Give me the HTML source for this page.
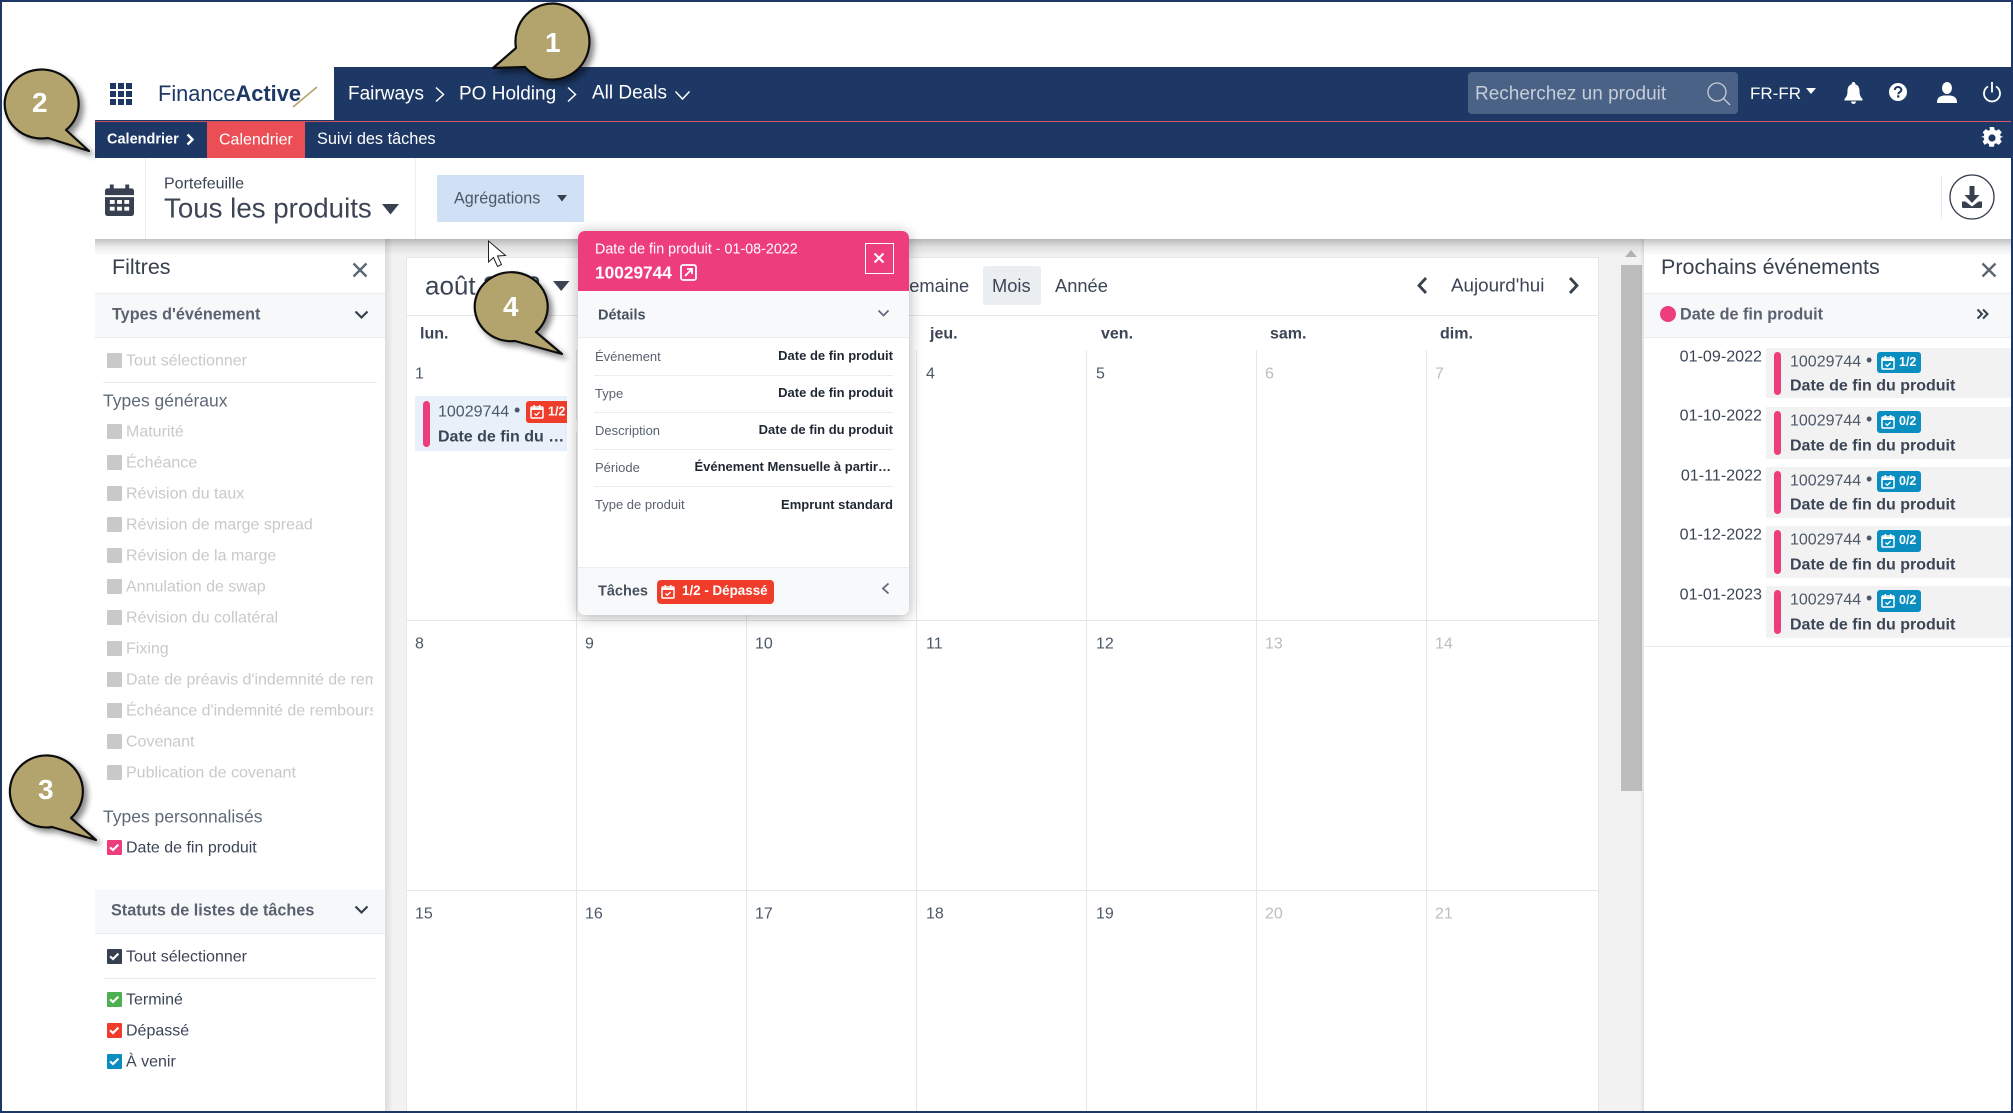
<!DOCTYPE html>
<html lang="fr"><head><meta charset="utf-8"><title>Calendrier</title>
<style>
html,body{margin:0;padding:0;width:2013px;height:1113px;overflow:hidden;background:#fff}
body{font-family:"Liberation Sans",sans-serif;color:#36404f;position:relative}
.a{position:absolute}
.t{position:absolute;white-space:nowrap;transform:translateY(calc(-50% + 1px));line-height:1.2}
.nav{color:#fff;font-size:19px}
.b{font-weight:700}
.cb{position:absolute;left:107px;width:14.5px;height:14.5px;background:#c9c9c9;border-radius:1px}
.cb svg{position:absolute;left:0;top:0;width:14.5px;height:14.5px}
.dis{left:126px;font-size:16px;color:#c9c9c9}
.on{left:126px;font-size:16px;color:#3b4556}
.day{font-size:16px;color:#4c5868}
.we{color:#bdbdbd}
.wd{font-size:16px;font-weight:700;color:#3b4556}
.vl{position:absolute;width:1px;top:350px;height:763px;background:#e6e6e6}
.hl{position:absolute;left:406px;width:1192px;height:1px;background:#e6e6e6}
.pl{left:595px;font-size:13px;color:#59626f}
.pr{right:1120px;font-size:13px;font-weight:700;color:#1f2733}
.ps{position:absolute;left:594px;width:299px;height:1px;background:#e9edf1}
.row{position:absolute;left:1766px;width:245px;background:#f2f2f2}
.bar{position:absolute;left:8px;width:7px;background:#ee3d7d;border-radius:3.5px}
.dt{right:251px;font-size:16.1px;color:#3b4556}
.id{left:1790px;font-size:16px;color:#4c5868}
.dot{left:1866px;font-size:18px;color:#4c5868}
.nm{left:1790px;font-size:16px;font-weight:700;color:#3b4556}
.bd{position:absolute;left:1877px;width:44px;height:21px;background:#0a8dbf;border-radius:3px;color:#fff;font-weight:700;font-size:12.5px}
.bd svg{position:absolute;left:4px;top:3px;width:14px;height:15px}
.bd span{position:absolute;left:22px;top:3px;line-height:15px}
</style></head>
<body>
<svg width="0" height="0" style="position:absolute">
<symbol id="ck" viewBox="0 0 15 15"><path d="M3.2 7.6 6.2 10.4 11.8 4.8" fill="none" stroke="#fff" stroke-width="2.2"/></symbol>
<symbol id="cal" viewBox="0 0 14 15"><path d="M2 3h10a1 1 0 0 1 1 1v9a1 1 0 0 1-1 1H2a1 1 0 0 1-1-1V4a1 1 0 0 1 1-1Z" fill="none" stroke="#fff" stroke-width="1.5"/><path d="M1 4h12v2H1zM3.5 1h1.6v3H3.500zM8.900 1h1.600v3H8.900z" fill="#fff"/><path d="M4.500 9.500 6.300 11.200 9.600 8" fill="none" stroke="#fff" stroke-width="1.400"/></symbol>
</svg>

<!-- top nav -->
<div class="a" style="left:334px;top:67px;width:1679px;height:54px;background:#1d3864"></div>
<div class="a" style="left:95px;top:120px;width:1918px;height:2px;background:#1d3864"></div>
<div class="a" style="left:334px;top:121px;width:1679px;height:1px;background:#d9596a"></div>
<div class="a" style="left:95px;top:122px;width:1918px;height:36px;background:#1d3864"></div>
<div class="a" style="left:95px;top:121px;width:239px;height:1px;background:#c9505f"></div>

<svg class="a" style="left:110px;top:83px" width="22" height="22" viewBox="0 0 22 22" fill="#1d3864"><path d="M0 0h6v6H0zM8 0h6v6H8zM16 0h6v6h-6zM0 8h6v6H0zM8 8h6v6H8zM16 8h6v6h-6zM0 16h6v6H0zM8 16h6v6H8zM16 16h6v6h-6z"/></svg>
<div class="t" style="left:158px;top:93px;font-size:21.8px;color:#1d3864">Finance<span class="b">Active</span></div>
<svg class="a" style="left:292px;top:86px" width="26" height="22"><path d="M1 21 25 1" stroke="#b3a36d" stroke-width="1.600"/></svg>

<div class="t nav" style="left:348px;top:94px">Fairways</div>
<svg class="a" style="left:434px;top:86px" width="12" height="17"><path d="M2 1.500 9.500 8.500 2 15.500" fill="none" stroke="#fff" stroke-width="1.500"/></svg>
<div class="t nav" style="left:459px;top:94px">PO Holding</div>
<svg class="a" style="left:566px;top:86px" width="12" height="17"><path d="M2 1.500 9.500 8.500 2 15.500" fill="none" stroke="#fff" stroke-width="1.500"/></svg>
<div class="t nav" style="left:592px;top:93px">All Deals</div>
<svg class="a" style="left:674px;top:90px" width="17" height="11"><path d="M1.500 1.500 8.500 9 15.500 1.500" fill="none" stroke="#fff" stroke-width="1.500"/></svg>

<div class="a" style="left:1468px;top:72px;width:270px;height:42px;background:#4a6285;border-radius:4px"></div>
<div class="t" style="left:1475px;top:94px;font-size:19px;color:#c6cdd8">Recherchez un produit</div>
<svg class="a" style="left:1706px;top:81px" width="26" height="25" fill="none" stroke="#c6cdd8" stroke-width="1.300"><circle cx="11" cy="11" r="9"/><path d="M17.500 17.500 24 24"/></svg>
<div class="t" style="left:1750px;top:93px;font-size:17px;color:#fff">FR-FR</div>
<svg class="a" style="left:1806px;top:88px" width="11" height="7"><path d="M0 0h10L5 6Z" fill="#fff"/></svg>
<svg class="a" style="left:1844px;top:82px" width="19" height="22" viewBox="0 0 19 22" fill="#fff"><path d="M9.500 0a1.700 1.700 0 0 1 1.700 2.300C14 3 15.500 5.500 15.500 9c0 4.500 1.300 6 3 8v1.500H.5V17c1.700-2 3-3.500 3-8 0-3.500 1.500-6 4.300-6.700A1.700 1.700 0 0 1 9.500 0ZM7 19.500h5a2.500 2.500 0 0 1-5 0Z"/></svg>
<svg class="a" style="left:1889px;top:83px" width="18" height="18" viewBox="0 0 18 18"><circle cx="9" cy="9" r="9" fill="#fff"/><path d="M5.800 7C5.800 5.200 7.200 4 9 4s3.300 1.100 3.300 2.900c0 2.300-3 2.200-3 4.300" fill="none" stroke="#1d3864" stroke-width="2"/><rect x="8.100" y="12.300" width="2.300" height="2.300" fill="#1d3864"/></svg>
<svg class="a" style="left:1937px;top:82px" width="20" height="21" viewBox="0 0 20 21" fill="#fff"><ellipse cx="10" cy="6" rx="5" ry="6"/><path d="M0 21c0-4 1-6.500 6.500-7.500h7C19 14.500 20 17 20 21Z"/></svg>
<svg class="a" style="left:1983px;top:82px" width="18" height="21" viewBox="0 0 18 21" fill="none" stroke="#fff" stroke-width="1.800"><path d="M9 0v10.500"/><path d="M5 4.500a8 8 0 1 0 8 0"/></svg>
<svg class="a" style="left:1981px;top:127px" width="22" height="22" viewBox="0 0 22 22"><path fill="#fff" d="M8.500 0h5l.7 3.200 1.800.8 2.800-1.700 3.200 3.500-1.800 2.700.7 1.700L24 11l-3 .8-.7 1.800 1.800 2.700-3.500 3.500-2.700-1.700-1.900.7-.7 3.200h-5l-.7-3.200-1.800-.7-2.800 1.700L.9 16.300l1.800-2.700-.7-1.800L-1 11l3-.8.700-1.700L.9 5.800l3.400-3.500 2.800 1.700 1.800-.8Z" transform="scale(.9) translate(1 0)"/><circle cx="11" cy="11" r="3.600" fill="#1d3864"/></svg>

<!-- sub nav -->
<div class="t b" style="left:107px;top:139px;font-size:14.5px;color:#fff">Calendrier</div>
<svg class="a" style="left:186px;top:133px" width="9" height="13"><path d="M1.500 1.500 6.500 6.500 1.500 11.500" fill="none" stroke="#fff" stroke-width="2.400"/></svg>
<div class="a" style="left:207px;top:122px;width:98px;height:36px;background:#eb4f55"></div>
<div class="t" style="left:219px;top:139px;font-size:16px;color:#fff">Calendrier</div>
<div class="t" style="left:317px;top:139px;font-size:16.3px;color:#fff">Suivi des tâches</div>

<!-- main bg -->
<div class="a" style="left:385px;top:239px;width:1628px;height:874px;background:#f2f2f2"></div>
<!-- calendar card -->
<div class="a" style="left:406px;top:257px;width:1191px;height:856px;background:#fff;border:1px solid #e6e6e6;border-bottom:0"></div>
<div class="hl" style="top:315px"></div>
<div class="vl" style="left:576px"></div><div class="vl" style="left:746px"></div><div class="vl" style="left:916px"></div><div class="vl" style="left:1086px"></div><div class="vl" style="left:1256px"></div><div class="vl" style="left:1426px"></div>
<div class="hl" style="top:620px"></div><div class="hl" style="top:890px"></div>

<div class="t" style="left:425px;top:285px;font-size:26px;color:#3b4556">août 2022</div>
<svg class="a" style="left:553px;top:281px" width="17" height="11"><path d="M0 0h16.500L8.200 10Z" fill="#3b4556"/></svg>
<div class="t" style="left:897px;top:285px;font-size:18.3px;color:#3b4556">Semaine</div>
<div class="a" style="left:983px;top:266px;width:58px;height:39px;background:#ebeef1;border-radius:3px"></div>
<div class="t" style="left:992px;top:285px;font-size:18.3px;color:#3b4556">Mois</div>
<div class="t" style="left:1055px;top:285px;font-size:18.3px;color:#3b4556">Année</div>
<svg class="a" style="left:1416px;top:276px" width="12" height="19"><path d="M10 2 3 9.500 10 17" fill="none" stroke="#36404f" stroke-width="2.800"/></svg>
<div class="t" style="left:1451px;top:285px;font-size:18.8px;color:#3b4556">Aujourd'hui</div>
<svg class="a" style="left:1568px;top:276px" width="12" height="19"><path d="M2 2 9 9.500 2 17" fill="none" stroke="#36404f" stroke-width="2.800"/></svg>

<div class="t wd" style="left:420px;top:333px">lun.</div>
<div class="t wd" style="left:930px;top:333px">jeu.</div>
<div class="t wd" style="left:1101px;top:333px">ven.</div>
<div class="t wd" style="left:1270px;top:333px">sam.</div>
<div class="t wd" style="left:1440px;top:333px">dim.</div>

<div class="t day" style="left:415px;top:373px">1</div><div class="t day" style="left:926px;top:373px">4</div><div class="t day" style="left:1096px;top:373px">5</div><div class="t day we" style="left:1265px;top:373px">6</div><div class="t day we" style="left:1435px;top:373px">7</div>
<div class="t day" style="left:415px;top:643px">8</div><div class="t day" style="left:585px;top:643px">9</div><div class="t day" style="left:755px;top:643px">10</div><div class="t day" style="left:926px;top:643px">11</div><div class="t day" style="left:1096px;top:643px">12</div><div class="t day we" style="left:1265px;top:643px">13</div><div class="t day we" style="left:1435px;top:643px">14</div>
<div class="t day" style="left:415px;top:913px">15</div><div class="t day" style="left:585px;top:913px">16</div><div class="t day" style="left:755px;top:913px">17</div><div class="t day" style="left:926px;top:913px">18</div><div class="t day" style="left:1096px;top:913px">19</div><div class="t day we" style="left:1265px;top:913px">20</div><div class="t day we" style="left:1435px;top:913px">21</div>

<!-- event pill -->
<div class="a" style="left:415px;top:396px;width:152px;height:55px;background:#e8f0fa"></div>
<div class="a" style="left:423px;top:401px;width:7px;height:46px;background:#ee3d7d;border-radius:3.500px"></div>
<div class="t" style="left:438px;top:411px;font-size:16px;color:#4c5868">10029744</div>
<div class="t" style="left:514px;top:410px;font-size:18px;color:#4c5868">•</div>
<div class="a" style="left:526px;top:401px;width:41px;height:22px;background:#f03d2b;border-radius:3px 0 0 3px"></div>
<svg class="a" style="left:530px;top:404px" width="14" height="15"><use href="#cal"/></svg>
<div class="t b" style="left:548px;top:411px;font-size:12.5px;color:#fff">1/2</div>
<div class="t b" style="left:438px;top:436px;font-size:16px;color:#3b4556">Date de fin du …</div>

<!-- scrollbar -->
<div class="a" style="left:1621px;top:265px;width:21px;height:526px;background:#bdbdbd"></div>
<svg class="a" style="left:1625px;top:250px" width="12" height="8"><path d="M6 0 12 7H0Z" fill="#b5b5b5"/></svg>

<!-- left panel -->
<div class="a" style="left:95px;top:239px;width:290px;height:874px;background:#fff"></div>
<div class="a" style="left:385px;top:239px;width:8px;height:874px;background:linear-gradient(90deg,rgba(0,0,0,.09),rgba(0,0,0,0))"></div>

<div class="t" style="left:112px;top:267px;font-size:21.5px;color:#36404f">Filtres</div>
<svg class="a" style="left:352px;top:262px" width="16" height="16"><path d="M1.500 1.500 14.500 14.500M14.500 1.500 1.500 14.500" stroke="#5b6572" stroke-width="2.300"/></svg>
<div class="a" style="left:95px;top:293px;width:290px;height:45px;background:#f6f8fa;border-top:1px solid #eceff2;border-bottom:1px solid #e8ebef;box-sizing:border-box"></div>
<div class="t b" style="left:112px;top:314px;font-size:16.2px;color:#5a6270">Types d'événement</div>
<svg class="a" style="left:354px;top:310px" width="15" height="10"><path d="M1.500 1.500 7.500 7.500 13.500 1.500" fill="none" stroke="#36404f" stroke-width="2.200"/></svg>

<div class="cb" style="top:353px"></div><div class="t dis" style="top:360px">Tout sélectionner</div>
<div class="a" style="left:103px;top:382px;width:274px;height:1px;background:#e9ebee"></div>
<div class="t" style="left:103px;top:400px;font-size:17.5px;color:#5f6a78">Types généraux</div>
<div class="cb" style="top:424px"></div><div class="t dis" style="top:431px">Maturité</div>
<div class="cb" style="top:455px"></div><div class="t dis" style="top:462px">Échéance</div>
<div class="cb" style="top:486px"></div><div class="t dis" style="top:493px">Révision du taux</div>
<div class="cb" style="top:517px"></div><div class="t dis" style="top:524px">Révision de marge spread</div>
<div class="cb" style="top:548px"></div><div class="t dis" style="top:555px">Révision de la marge</div>
<div class="cb" style="top:579px"></div><div class="t dis" style="top:586px">Annulation de swap</div>
<div class="cb" style="top:610px"></div><div class="t dis" style="top:617px">Révision du collatéral</div>
<div class="cb" style="top:641px"></div><div class="t dis" style="top:648px">Fixing</div>
<div class="cb" style="top:672px"></div><div class="t dis" style="top:679px;width:247px;overflow:hidden">Date de préavis d'indemnité de remboursement</div>
<div class="cb" style="top:703px"></div><div class="t dis" style="top:710px;width:247px;overflow:hidden">Échéance d'indemnité de remboursement</div>
<div class="cb" style="top:734px"></div><div class="t dis" style="top:741px">Covenant</div>
<div class="cb" style="top:765px"></div><div class="t dis" style="top:772px">Publication de covenant</div>
<div class="t" style="left:103px;top:816px;font-size:17.5px;color:#5f6a78">Types personnalisés</div>
<div class="cb" style="top:840px;background:#ee3d7d"><svg><use href="#ck"/></svg></div><div class="t on" style="top:846.5px">Date de fin produit</div>
<div class="a" style="left:95px;top:890px;width:290px;height:44px;background:#f6f8fa;border-bottom:1px solid #e8ebef;box-sizing:border-box"></div>
<div class="t b" style="left:111px;top:910px;font-size:16.2px;color:#5a6270">Statuts de listes de tâches</div>
<svg class="a" style="left:354px;top:905px" width="15" height="10"><path d="M1.500 1.500 7.500 7.500 13.500 1.500" fill="none" stroke="#36404f" stroke-width="2.200"/></svg>
<div class="cb" style="top:949px;background:#36404f"><svg><use href="#ck"/></svg></div><div class="t on" style="top:956px">Tout sélectionner</div>
<div class="a" style="left:103px;top:978px;width:274px;height:1px;background:#e9ebee"></div>
<div class="cb" style="top:992px;background:#4caf50"><svg><use href="#ck"/></svg></div><div class="t on" style="top:999px">Terminé</div>
<div class="cb" style="top:1023px;background:#f03d2b"><svg><use href="#ck"/></svg></div><div class="t on" style="top:1030px">Dépassé</div>
<div class="cb" style="top:1054px;background:#0a8dbf"><svg><use href="#ck"/></svg></div><div class="t on" style="top:1061px">À venir</div>

<!-- right panel -->
<div class="a" style="left:1644px;top:239px;width:369px;height:874px;background:#fff"></div>
<div class="a" style="left:1640px;top:239px;width:4px;height:874px;background:linear-gradient(270deg,rgba(0,0,0,.08),rgba(0,0,0,0))"></div>
<div class="t" style="left:1661px;top:267px;font-size:21.5px;color:#36404f">Prochains événements</div>
<svg class="a" style="left:1981px;top:262px" width="16" height="16"><path d="M1.500 1.500 14.500 14.500M14.500 1.500 1.500 14.500" stroke="#5b6572" stroke-width="2.300"/></svg>
<div class="a" style="left:1644px;top:293px;width:369px;height:45px;background:#f6f8fa;border-top:1px solid #eceff2;border-bottom:1px solid #e8ebef;box-sizing:border-box"></div>
<div class="a" style="left:1660px;top:306px;width:16px;height:16px;border-radius:50%;background:#ee3d7d"></div>
<div class="t b" style="left:1680px;top:314px;font-size:16.2px;color:#5a6270">Date de fin produit</div>
<svg class="a" style="left:1976px;top:308px" width="13" height="12" fill="none" stroke="#36404f" stroke-width="2"><path d="M1.500 1.500 6 6 1.500 10.500M7 1.500 11.500 6 7 10.500"/></svg>

<div class="row" style="top:348px;height:50px"><div class="bar" style="top:4px;height:43px"></div></div>
<div class="t dt" style="top:356px">01-09-2022</div><div class="t id" style="top:361px">10029744</div><div class="t dot" style="top:360px">•</div>
<div class="bd" style="top:352px"><svg><use href="#cal"/></svg><span>1/2</span></div><div class="t nm" style="top:385px">Date de fin du produit</div>

<div class="row" style="top:407px;height:52px"><div class="bar" style="top:4px;height:44px"></div></div>
<div class="t dt" style="top:415px">01-10-2022</div><div class="t id" style="top:420px">10029744</div><div class="t dot" style="top:419px">•</div>
<div class="bd" style="top:411px;height:22px"><svg><use href="#cal"/></svg><span>0/2</span></div><div class="t nm" style="top:445px">Date de fin du produit</div>

<div class="row" style="top:467px;height:51px"><div class="bar" style="top:4px;height:43px"></div></div>
<div class="t dt" style="top:475px">01-11-2022</div><div class="t id" style="top:480px">10029744</div><div class="t dot" style="top:479px">•</div>
<div class="bd" style="top:471px"><svg><use href="#cal"/></svg><span>0/2</span></div><div class="t nm" style="top:504px">Date de fin du produit</div>

<div class="row" style="top:526px;height:52px"><div class="bar" style="top:4px;height:44px"></div></div>
<div class="t dt" style="top:534px">01-12-2022</div><div class="t id" style="top:539px">10029744</div><div class="t dot" style="top:538px">•</div>
<div class="bd" style="top:530px;height:22px"><svg><use href="#cal"/></svg><span>0/2</span></div><div class="t nm" style="top:564px">Date de fin du produit</div>

<div class="row" style="top:586px;height:52px"><div class="bar" style="top:4px;height:44px"></div></div>
<div class="t dt" style="top:594px">01-01-2023</div><div class="t id" style="top:599px">10029744</div><div class="t dot" style="top:598px">•</div>
<div class="bd" style="top:590px;height:22px"><svg><use href="#cal"/></svg><span>0/2</span></div><div class="t nm" style="top:624px">Date de fin du produit</div>
<div class="a" style="left:1644px;top:646px;width:369px;height:1px;background:#e9ebee"></div>

<!-- toolbar -->
<div class="a" style="left:95px;top:158px;width:1918px;height:81px;background:#fff"></div>
<div class="a" style="left:95px;top:239px;width:1918px;height:17px;background:linear-gradient(180deg,rgba(0,0,0,.24),rgba(0,0,0,.08) 45%,rgba(0,0,0,0))"></div>
<div class="a" style="left:145px;top:158px;width:1px;height:81px;background:#eceef0"></div>
<div class="a" style="left:415px;top:158px;width:1px;height:81px;background:#eceef0"></div>
<div class="a" style="left:1941px;top:175px;width:1px;height:44px;background:#e8eaed"></div>
<svg class="a" style="left:105px;top:184px" width="29" height="33" viewBox="0 0 30 33"><path fill="#36404f" d="M5 0h4v4h12V0h4v4h2.500A2.500 2.500 0 0 1 30 6.500V11H0V6.500A2.500 2.500 0 0 1 2.500 4H5ZM0 13h30v17a2.500 2.500 0 0 1-2.500 2.500h-25A2.500 2.500 0 0 1 0 30Z"/><path fill="#fff" d="M5 16h5v4H5zM12.500 16h5v4h-5zM20 16h5v4h-5zM5 23h5v4H5zM12.500 23h5v4h-5zM20 23h5v4h-5z"/></svg>
<div class="t" style="left:164px;top:183px;font-size:16px;color:#3b4556">Portefeuille</div>
<div class="t" style="left:164px;top:207px;font-size:27.7px;color:#3b4556">Tous les produits</div>
<svg class="a" style="left:382px;top:204px" width="18" height="11"><path d="M0 0h17L8.500 10.500Z" fill="#36404f"/></svg>
<div class="a" style="left:437px;top:175px;width:147px;height:47px;background:#d0e1f6"></div>
<div class="t" style="left:454px;top:198px;font-size:16.2px;color:#4c5868">Agrégations</div>
<svg class="a" style="left:557px;top:195px" width="11" height="7"><path d="M0 0h10L5 6.500Z" fill="#36404f"/></svg>
<svg class="a" style="left:1949px;top:174px" width="46" height="46" viewBox="0 0 46 46"><circle cx="23" cy="23" r="22" fill="#fff" stroke="#36404f" stroke-width="1.300"/><path fill="#36404f" d="M20.500 12h5v9h5L23 29l-7.500-8h5ZM13 27.500h3.500l6.500 5 6.500-5H33V33a1 1 0 0 1-1 1H14a1 1 0 0 1-1-1Z"/></svg>

<!-- popover -->
<div class="a" style="left:573px;top:421px;width:10px;height:10px;background:#fff;transform:rotate(45deg)"></div>
<div class="a" style="left:578px;top:231px;width:331px;height:384px;background:#fff;border-radius:7px;box-shadow:0 2px 14px rgba(0,0,0,.32);overflow:hidden">
  <div class="a" style="left:0;top:0;width:331px;height:60px;background:#ee3d7d"></div>
  <div class="a" style="left:0;top:60px;width:331px;height:47px;background:#f7f9fb;border-bottom:1px solid #e9edf1;box-sizing:border-box"></div>
  <div class="a" style="left:0;top:336px;width:331px;height:48px;background:#f7f9fb;border-top:1px solid #e9edf1;box-sizing:border-box"></div>
</div>
<div class="t" style="left:595px;top:249px;font-size:14.3px;color:#fff">Date de fin produit - 01-08-2022</div>
<div class="t b" style="left:595px;top:272px;font-size:17.3px;color:#fff">10029744</div>
<svg class="a" style="left:680px;top:264px" width="17" height="17" fill="none" stroke="#fff"><rect x="1" y="1" width="15" height="15" rx="2" stroke-width="1.800"/><path d="M5 12 12 5M7 5h5v5" stroke-width="1.800"/></svg>
<div class="a" style="left:865px;top:243px;width:26.5px;height:29px;border:1px solid #fff"></div>
<svg class="a" style="left:873px;top:252px" width="12" height="12"><path d="M1.500 1.500 10.500 10.500M10.500 1.500 1.500 10.500" stroke="#fff" stroke-width="2"/></svg>
<div class="t b" style="left:598px;top:315px;font-size:14.5px;color:#48525f">Détails</div>
<svg class="a" style="left:877px;top:309px" width="13" height="9"><path d="M1.500 1.500 6.500 6.500 11.500 1.500" fill="none" stroke="#5f6a78" stroke-width="1.700"/></svg>

<div class="t pl" style="top:356px">Événement</div><div class="t pr" style="top:355px">Date de fin produit</div>
<div class="ps" style="top:375px"></div>
<div class="t pl" style="top:393px">Type</div><div class="t pr" style="top:392px">Date de fin produit</div>
<div class="ps" style="top:412px"></div>
<div class="t pl" style="top:430px">Description</div><div class="t pr" style="top:429px">Date de fin du produit</div>
<div class="ps" style="top:449px"></div>
<div class="t pl" style="top:467px">Période</div><div class="t pr" style="top:466px;right:1122px">Événement Mensuelle à partir…</div>
<div class="ps" style="top:486px"></div>
<div class="t pl" style="top:504px">Type de produit</div><div class="t pr" style="top:503.5px">Emprunt standard</div>

<div class="t b" style="left:598px;top:591px;font-size:14.5px;color:#48525f">Tâches</div>
<div class="a" style="left:657px;top:580px;width:117px;height:24px;background:#f03d2b;border-radius:4px"></div>
<svg class="a" style="left:661px;top:584px" width="14" height="15"><use href="#cal"/></svg>
<div class="t b" style="left:682px;top:590px;font-size:13.4px;color:#fff">1/2 - Dépassé</div>
<svg class="a" style="left:881px;top:582px" width="9" height="13"><path d="M7.500 1.500 2 6.500 7.500 11.500" fill="none" stroke="#5f6a78" stroke-width="1.800"/></svg>

<!-- page frame -->
<div class="a" style="left:0;top:0;width:2013px;height:1113px;box-sizing:border-box;border:2.500px solid #1d3864;pointer-events:none"></div>

<!-- mouse cursor -->
<svg class="a" style="left:487px;top:240px" width="22" height="29"><path d="M1.500 1 1.500 22 6.500 17.500 10.500 26.500 14.500 24.500 10.500 16 18.500 15.500Z" fill="#fff" stroke="#222" stroke-width="1"/></svg>

<!-- callouts -->
<svg class="a" style="left:0;top:0;filter:drop-shadow(4px 4px 3px rgba(0,0,0,.45))" width="2013" height="1113" fill="#b3a36d" stroke="#0c0c0c" stroke-width="2.200" stroke-linejoin="round">
<path d="M516 48 A37 38 0 1 1 525 67 L493 68 Z"/>
<path d="M66 130 A37 34.500 0 1 0 48 138 L89 151 Z"/>
<path d="M71 818 A36.500 36 0 1 0 52 827 L96 840 Z"/>
<path d="M536 332 A36.500 34.500 0 1 0 515 341 L562 354 Z"/>
</svg>
<div class="t b" style="left:545px;top:42px;font-size:28px;color:#fff">1</div>
<div class="t b" style="left:32px;top:102px;font-size:28px;color:#fff">2</div>
<div class="t b" style="left:38px;top:789px;font-size:28px;color:#fff">3</div>
<div class="t b" style="left:503px;top:306px;font-size:28px;color:#fff">4</div>
</body></html>
